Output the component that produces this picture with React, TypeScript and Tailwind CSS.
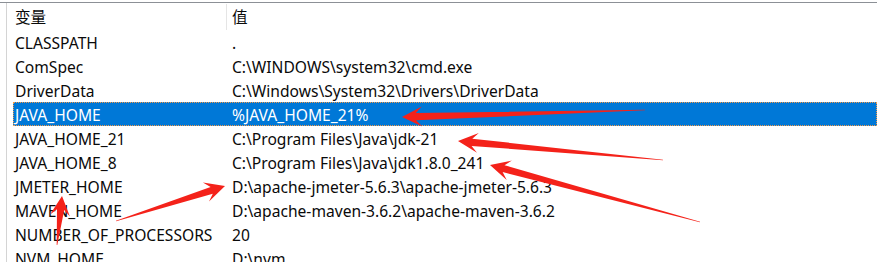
import React from "react";

type Row = { name: string; value: string; selected?: boolean };

const rows: Row[] = [
  { name: "CLASSPATH", value: "." },
  { name: "ComSpec", value: "C:\\WINDOWS\\system32\\cmd.exe" },
  { name: "DriverData", value: "C:\\Windows\\System32\\Drivers\\DriverData" },
  { name: "JAVA_HOME", value: "%JAVA_HOME_21%", selected: true },
  { name: "JAVA_HOME_21", value: "C:\\Program Files\\Java\\jdk-21" },
  { name: "JAVA_HOME_8", value: "C:\\Program Files\\Java\\jdk1.8.0_241" },
  { name: "JMETER_HOME", value: "D:\\apache-jmeter-5.6.3\\apache-jmeter-5.6.3" },
  { name: "MAVEN_HOME", value: "D:\\apache-maven-3.6.2\\apache-maven-3.6.2" },
  { name: "NUMBER_OF_PROCESSORS", value: "20" },
  { name: "NVM_HOME", value: "D:\\nvm" },
];

// Tapered annotation arrow: hairline tail widening toward a triangular head.
function arrowPoints(tx: number, ty: number, hx: number, hy: number) {
  const dx = hx - tx;
  const dy = hy - ty;
  const len = Math.hypot(dx, dy);
  const ux = dx / len;
  const uy = dy / len;
  const px = -uy;
  const py = ux;
  const headLen = Math.min(20, len * 0.4);
  const headW = 10;
  const neckW = 3.6;
  const bx = hx - ux * headLen;
  const by = hy - uy * headLen;
  const nx = hx - ux * (headLen - 6);
  const ny = hy - uy * (headLen - 6);
  const pts = [
    [tx + px * 0.3, ty + py * 0.3],
    [nx + px * neckW, ny + py * neckW],
    [bx + px * headW, by + py * headW],
    [hx, hy],
    [bx - px * headW, by - py * headW],
    [nx - px * neckW, ny - py * neckW],
    [tx - px * 0.3, ty - py * 0.3],
  ];
  return pts.map((p) => `${p[0].toFixed(1)},${p[1].toFixed(1)}`).join(" ");
}

const arrows: [number, number, number, number][] = [
  [645, 110, 402, 117],
  [663, 160, 458, 141],
  [700, 222, 490, 165],
  [116, 221, 225, 186],
  [57, 245, 62, 196],
];

export default function App() {
  return (
    <div
      className="relative w-[877px] h-[262px] overflow-hidden bg-white text-[15.6px] text-[#0a0a0a]"
      style={{ fontFamily: '"Noto Sans", "Noto Sans CJK SC", sans-serif' }}
    >
      <div className="mt-[2px] h-full border-t border-[#8c9096]">
        <div className="ml-[6px] h-full border-l border-[#d4d4d4]">
          {/* column header */}
          <div className="flex h-[27px] items-center pl-[6px]">
            <div className="w-[213px] pl-[2px] pt-[2px] leading-none">变量</div>
            <div className="h-[26px] w-px bg-[#e5e5e5]" />
            <div className="pl-[5px] pt-[2px] leading-none">值</div>
          </div>
          {/* variable rows */}
          <div className="pl-[6px]">
            {rows.map((r) => (
              <div
                key={r.name}
                className={
                  r.selected
                    ? "flex h-[24px] items-center pt-[3px] leading-none bg-[#0078d7] text-white outline-1 outline-dotted -outline-offset-1 outline-[#f29a4a]"
                    : "flex h-[24px] items-center pt-[3px] leading-none"
                }
              >
                <div className="w-[219px] shrink-0 whitespace-nowrap pl-[2px]">{r.name}</div>
                <div className="whitespace-nowrap">{r.value}</div>
              </div>
            ))}
          </div>
        </div>
      </div>
      <svg className="pointer-events-none absolute left-0 top-0" width={877} height={262}>
        {arrows.map((a, i) => (
          <polygon key={i} points={arrowPoints(a[0], a[1], a[2], a[3])} fill="#f4221a" />
        ))}
      </svg>
    </div>
  );
}
